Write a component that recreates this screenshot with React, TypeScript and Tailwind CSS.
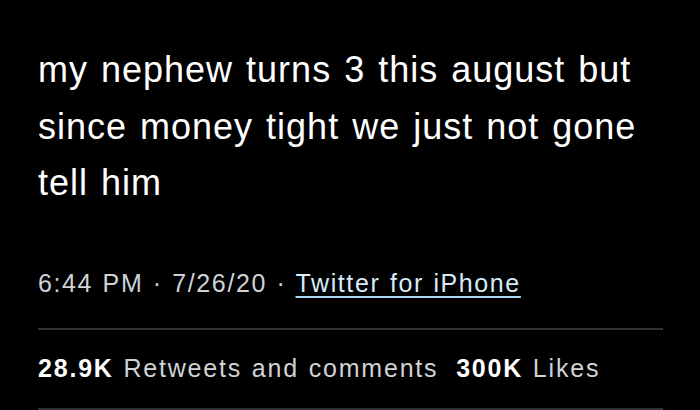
export default function App() {
  return (
    <div
      className="w-[700px] h-[410px] bg-black overflow-hidden px-[38px]"
      style={{ fontFamily: '"Liberation Sans", Arial, sans-serif' }}
    >
      <p className="pt-[42px] text-[36px] leading-[56.5px] tracking-[1px] [word-spacing:2px] text-white">
        my nephew turns 3 this august but
        <br />
        since money tight we just not gone
        <br />
        tell him
      </p>
      <div className="mt-[56px] text-[25px] leading-[30px] tracking-[1.6px] [word-spacing:1px] text-[#cfd3d6]">
        6:44 PM · 7/26/20 ·{' '}
        <span className="text-[#d6ecfa] underline decoration-[2px] decoration-[#a9d9f7] underline-offset-[4px]">
          Twitter for iPhone
        </span>
      </div>
      <div className="mt-[30px] w-[625px] border-t-2 border-[#2f3336]" />
      <div className="mt-[23px] text-[25px] leading-[30px] tracking-[1.8px] [word-spacing:1px] text-[#cfd3d6]">
        <span className="font-bold text-white">28.9K</span> Retweets and comments{' '}
        <span className="ml-2 font-bold text-white">300K</span> Likes
      </div>
      <div className="mt-[25px] w-[625px] border-t-2 border-[#2f3336]" />
    </div>
  );
}
